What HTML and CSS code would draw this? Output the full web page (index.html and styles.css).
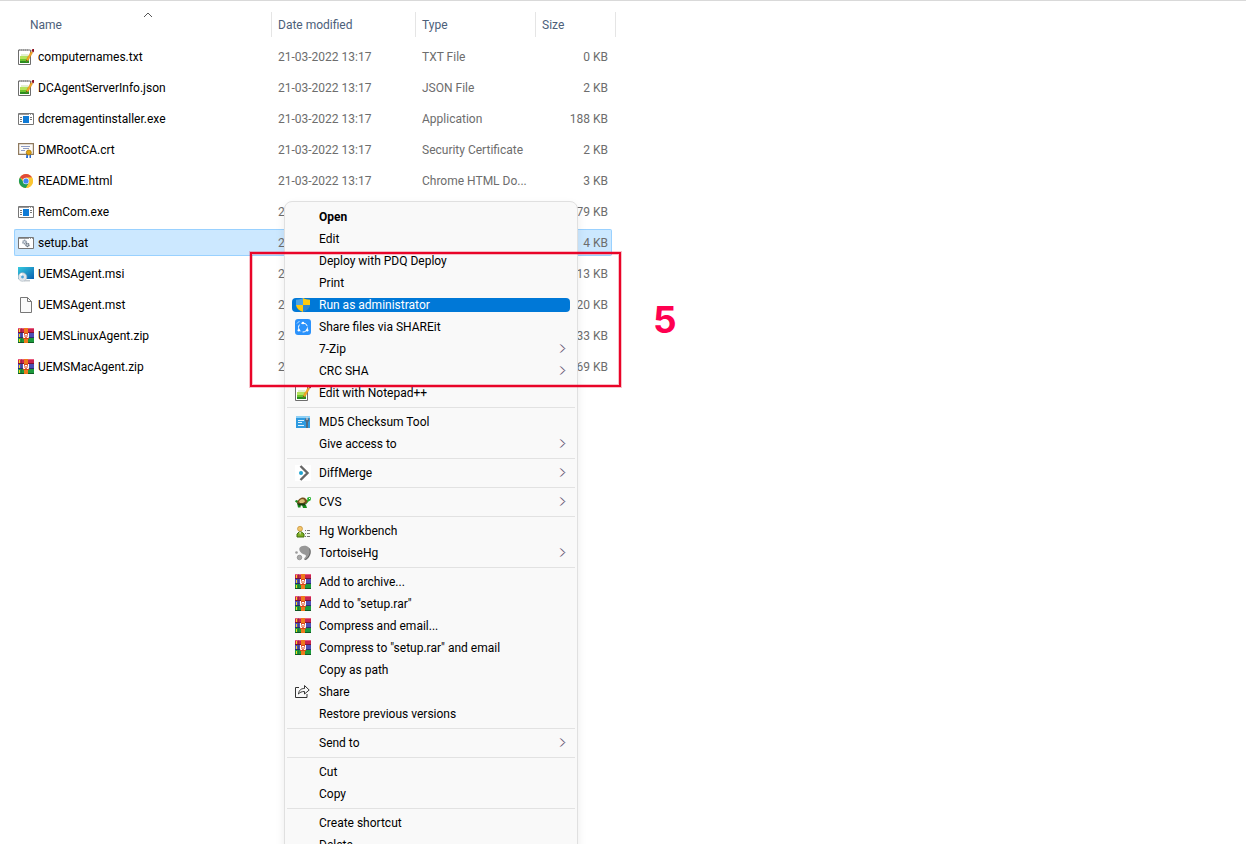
FILE: index.html
```
<!DOCTYPE html>
<html lang="en">
<head>
    <title>Files</title>
    <meta charset="UTF-8">
    <link rel="stylesheet" href="styles.css">
</head>
<body>
    <!-- icon set -->
    <svg class="icon-set" aria-hidden="true">
        <symbol id="notepad" viewBox="0 0 16 16">
            <path d="M.5 1h12v14.500H.5z" fill="#fff" stroke="#6d6d6d"/>
            <path d="M1.500 0v2M3.500 0v2M5.500 0v2M7.500 0v2M9.500 0v2" stroke="#999"/>
            <path d="M3 5h7v2H3z" fill="#e3f0cf"/>
            <path d="M2 7h9v3H2z" fill="#b4e35c"/>
            <path d="M2 10h9v2H2z" fill="#6cc42e"/>
            <path d="M2 12h9v2H2z" fill="#2b8c20"/>
            <path d="M8 12.500l.7-2.500L13 2.500l1.700 1-4.200 7.500z" fill="#f7a823" stroke="#c0761a" stroke-width=".4"/>
            <path d="M13.500 1.500L14.500 0h1.500v2.500l-1 1z" fill="#8d1020"/>
            <path d="M8 12.500l.5-1.600 1 .6z" fill="#333"/>
        </symbol>
        <symbol id="exe" viewBox="0 0 16 16">
            <path d="M.5 2.500h15v11H.5z" fill="#fff" stroke="#777"/>
            <path d="M1 3h14v1H1z" fill="#999"/>
            <path d="M11 3h1v1h-1zM13 3h1v1h-1z" fill="#fff"/>
            <path d="M2 6.500h2M2 8.500h2M2 10.500h2M12 6.500h2M12 8.500h2" stroke="#777"/>
            <path d="M5 5h6v7H5z" fill="#0f7bd6"/>
        </symbol>
        <symbol id="cert" viewBox="0 0 16 16">
            <path d="M.6 1.600h14.800v10.800H.6z" fill="#fdfbf7" stroke="#8f7a5f" stroke-width="1.200"/>
            <path d="M3 4.500h9M5 6.500h6M3 8.500h4" stroke="#8e9cc4"/>
            <path d="M8.500 11h1.500v5H8zM11.500 11H13v5h-1.500z" fill="#2b6bd1"/>
            <circle cx="10.800" cy="10.500" r="2.500" fill="#e2a513" stroke="#a06d05" stroke-width=".7"/>
        </symbol>
        <symbol id="chrome" viewBox="0 0 16 16">
            <circle cx="8" cy="8" r="7" fill="#fbc02d"/>
            <path d="M8 8L1.900 4.500A7 7 0 0 1 14.100 4.500L8 5z" fill="#e04a3a"/>
            <path d="M1.900 4.500A7 7 0 0 0 8 15l3-5.200L5.500 9z" fill="#1f9d58"/>
            <path d="M8 4.600h6.100A7 7 0 0 1 8 15l3-5.200z" fill="#fbc631"/>
            <circle cx="8" cy="8" r="3.200" fill="#f4f4f4"/>
            <circle cx="8" cy="8" r="2.600" fill="#4285f4"/>
        </symbol>
        <symbol id="bat" viewBox="0 0 16 16">
            <path d="M.5 2.500h15v11H.5z" fill="#fff" stroke="#777"/>
            <path d="M1 3h14v1H1z" fill="#999"/>
            <path d="M11 3h1v1h-1zM13 3h1v1h-1z" fill="#fff"/>
            <circle cx="6.500" cy="7" r="1.700" fill="#d9dfe6" stroke="#8a97a5" stroke-width="1.400" stroke-dasharray="1.300 .4"/>
            <circle cx="9.500" cy="10" r="1.500" fill="#d9dfe6" stroke="#67737f" stroke-width="1.400" stroke-dasharray="1.300 .4"/>
        </symbol>
        <symbol id="msi" viewBox="0 0 16 16">
            <linearGradient id="screen" x2="1" y2="1">
                <stop stop-color="#35cbe0"/>
                <stop offset="1" stop-color="#0a5fb0"/>
            </linearGradient>
            <path d="M0 1h16v12H0z" fill="url(#screen)"/>
            <path d="M6 14h6v1.500H6z" fill="#c6ccd1"/>
            <circle cx="4.500" cy="11" r="4.300" fill="#dfe5ea" stroke="#a9b4bd" stroke-width=".6"/>
            <path d="M4.500 11L1.500 8.200 4 7z" fill="#fff"/>
            <circle cx="4.500" cy="11" r="1.400" fill="#4fa3d8"/>
        </symbol>
        <symbol id="blank" viewBox="0 0 16 16">
            <path d="M2.500 .5h7l4 4v11h-11z" fill="#fafafa" stroke="#777"/>
            <path d="M9.500 .5v4h4" fill="none" stroke="#777"/>
        </symbol>
        <symbol id="rar" viewBox="0 0 16 16">
            <path d="M0 0h16v5H0z" fill="#c92350"/>
            <path d="M0 0h16v1H0z" fill="#e85a7e"/>
            <path d="M0 4h16v1H0z" fill="#7d1233"/>
            <path d="M0 5h16v5H0z" fill="#4d4fb5"/>
            <path d="M0 9h16v1H0z" fill="#2b2c72"/>
            <path d="M0 10h16v5H0z" fill="#1c9a3c"/>
            <path d="M0 14h16v1H0z" fill="#0e5a22"/>
            <path d="M1.500 1v3M1.500 6v3M1.500 11v3" stroke="#f5d91f"/>
            <path d="M3.500 0v15" stroke="#333" stroke-opacity=".3"/>
            <path d="M6 0h4v15H6z" fill="#ee7a1c"/>
            <path d="M5 5h6v6H5z" fill="#d9451b"/>
            <path d="M5.500 5v4.500H7V6.500h2v3h1.500V5" fill="none" stroke="#fff"/>
        </symbol>
        <symbol id="shield" viewBox="0 0 16 16">
            <path d="M8 1c2 1.200 4 1.700 7 1.700V8H8z" fill="#ffc90e"/>
            <path d="M8 1C6 2.200 4 2.700 1 2.700V8h7z" fill="#4aa3e6"/>
            <path d="M1 8c.4 3.500 3 5.500 7 7V8z" fill="#ffc90e"/>
            <path d="M15 8c-.4 3.500-3 5.500-7 7V8z" fill="#2f86cf"/>
        </symbol>
        <symbol id="shareit" viewBox="0 0 16 16">
            <rect width="16" height="16" rx="3" fill="#2b92fb"/>
            <circle cx="8" cy="8.500" r="4.500" fill="none" stroke="#fff" stroke-dasharray="7.400 2"/>
            <circle cx="8" cy="4" r="1.200" fill="#fff"/>
            <circle cx="3.800" cy="11.200" r="1.200" fill="#fff"/>
            <circle cx="12.200" cy="11.200" r="1.200" fill="#fff"/>
            <path d="M2 4.500L4.500 2" stroke="#bfe0ff"/>
        </symbol>
        <symbol id="md5" viewBox="0 0 16 16">
            <path d="M1 2h14v12H1z" fill="#2f9be0"/>
            <path d="M1 2h14v2H1z" fill="#8fd0f5"/>
            <path d="M3 6.500h6M3 8.500h4M3 11.500h6" stroke="#dff3ff"/>
            <path d="M10 5l2-1.500L14 5v2l-1 1v6h-2V8l-1-1z" fill="#536b80"/>
            <path d="M11.500 3v3h1V3z" fill="#e8eef2"/>
        </symbol>
        <symbol id="diffmerge" viewBox="0 0 16 16">
            <path d="M0 0h16v16H0z" fill="#fff"/>
            <path d="M5.500 1l7 7-7 7" fill="none" stroke="#666" stroke-width="2.400"/>
            <circle cx="6" cy="8" r="2" fill="#1fa3cf"/>
        </symbol>
        <symbol id="turtle" viewBox="0 0 16 16">
            <path d="M2 9L0 7.500l1-1.500 3 1zM2 9h4l-.5 4.500H3zM7 11h4l1 3H8z" fill="#168c1b"/>
            <path d="M10 8l2.500-2.500-.5-1.500L14 3l2 .5-.3 2.700-2.200 1.300L11 10.500z" fill="#22b02a"/>
            <path d="M2 9c1-4 4-5.500 6-5.500s4 1.500 4.500 4.500L9 11H4z" fill="#77501d"/>
            <path d="M5 6l2-1 2 .5 1 2-2 1.500H5L4 7.500z" fill="#d8bf78"/>
            <path d="M2 9.500h9l-1 2H4z" fill="#143d12"/>
            <path d="M14 4h1v1h-1z" fill="#fff"/>
        </symbol>
        <symbol id="workbench" viewBox="0 0 16 16">
            <circle cx="5" cy="5.800" r="2.500" fill="#f2c46c" stroke="#b98322" stroke-width=".6"/>
            <path d="M2 14v-3L4 9h2.500l2.500 2v3z" fill="#7eae23" stroke="#3f6d0e"/>
            <path d="M4.300 9h1.500l-.7 3z" fill="#fff"/>
            <path d="M10 7.500h1M12 7.500h3M10 10.500h1M12 10.500h3M10 13.500h1M12 13.500h3" stroke="#777"/>
        </symbol>
        <symbol id="tortoisehg" viewBox="0 0 16 16">
            <path d="M4.500 3C6 .8 9 .2 12 1.200c3.500 1.500 4.500 5.800 3 9.300-1 2.500-3 4.500-5 4.500-1.500-.2-1-1.500 0-2.500 1.500-1.500 1-2.500-.5-3C6.500 8.500 3.500 6 4.500 3z" fill="#979797"/>
            <path d="M14.500 3.500c1.500 3 .6 8-4.300 11.300" fill="none" stroke="#555" stroke-width=".8"/>
            <circle cx="4.500" cy="12.500" r="2.300" fill="#a8a8a8" stroke="#777" stroke-width=".6"/>
            <circle cx="1.500" cy="7.500" r="1.300" fill="#9b9b9b"/>
        </symbol>
        <symbol id="share" viewBox="0 0 16 16">
            <path d="M4 3.500H.5v10h11.500V10" fill="none" stroke="#333"/>
            <path d="M3.500 10C4 6 6 4.500 9.500 4.500v-3L14.200 6 9.500 10V7.500C6.500 7.500 5 8.300 3.500 10z" fill="none" stroke="#333" stroke-linejoin="round"/>
        </symbol>
        <symbol id="chevron" viewBox="0 0 8 10">
            <path d="M1 .5l4 4-4 4" fill="none" stroke="#f0a88c"/>
            <path d="M2 .5l4 4-4 4" fill="none" stroke="#5b9fd6"/>
            <path d="M1.500 .5l4 4-4 4" fill="none" stroke="#7b4a68" stroke-width=".6"/>
        </symbol>
    </svg>

    <main class="file-pane">
        <table class="file-list">
            <colgroup>
                <col class="col-name">
                <col class="col-date">
                <col class="col-type">
                <col class="col-size">
            </colgroup>
            <thead>
                <tr>
                    <th class="sorted">Name
                        <svg class="sort-arrow" viewBox="0 0 10 6"><path d="M1 5l4-4 4 4" fill="none" stroke="#555"/></svg>
                    </th>
                    <th>Date modified</th>
                    <th>Type</th>
                    <th>Size</th>
                </tr>
            </thead>
            <tbody>
                <tr>
                    <td><span class="file-name"><svg class="icon"><use href="#notepad"/></svg>computernames.txt</span></td>
                    <td>21-03-2022 13:17</td>
                    <td>TXT File</td>
                    <td>0 KB</td>
                </tr>
                <tr>
                    <td><span class="file-name"><svg class="icon"><use href="#notepad"/></svg>DCAgentServerInfo.json</span></td>
                    <td>21-03-2022 13:17</td>
                    <td>JSON File</td>
                    <td>2 KB</td>
                </tr>
                <tr>
                    <td><span class="file-name"><svg class="icon"><use href="#exe"/></svg>dcremagentinstaller.exe</span></td>
                    <td>21-03-2022 13:17</td>
                    <td>Application</td>
                    <td>188 KB</td>
                </tr>
                <tr>
                    <td><span class="file-name"><svg class="icon"><use href="#cert"/></svg>DMRootCA.crt</span></td>
                    <td>21-03-2022 13:17</td>
                    <td>Security Certificate</td>
                    <td>2 KB</td>
                </tr>
                <tr>
                    <td><span class="file-name"><svg class="icon"><use href="#chrome"/></svg>README.html</span></td>
                    <td>21-03-2022 13:17</td>
                    <td>Chrome HTML Do...</td>
                    <td>3 KB</td>
                </tr>
                <tr>
                    <td><span class="file-name"><svg class="icon"><use href="#exe"/></svg>RemCom.exe</span></td>
                    <td>21-03-2022 13:17</td>
                    <td></td>
                    <td>279 KB</td>
                </tr>
                <tr class="selected">
                    <td><span class="file-name"><svg class="icon"><use href="#bat"/></svg>setup.bat</span></td>
                    <td>21-03-2022 13:17</td>
                    <td></td>
                    <td>4 KB</td>
                </tr>
                <tr>
                    <td><span class="file-name"><svg class="icon"><use href="#msi"/></svg>UEMSAgent.msi</span></td>
                    <td>21-03-2022 13:17</td>
                    <td></td>
                    <td>313 KB</td>
                </tr>
                <tr>
                    <td><span class="file-name"><svg class="icon"><use href="#blank"/></svg>UEMSAgent.mst</span></td>
                    <td>21-03-2022 13:17</td>
                    <td></td>
                    <td>20 KB</td>
                </tr>
                <tr>
                    <td><span class="file-name"><svg class="icon"><use href="#rar"/></svg>UEMSLinuxAgent.zip</span></td>
                    <td>21-03-2022 13:17</td>
                    <td></td>
                    <td>533 KB</td>
                </tr>
                <tr>
                    <td><span class="file-name"><svg class="icon"><use href="#rar"/></svg>UEMSMacAgent.zip</span></td>
                    <td>21-03-2022 13:17</td>
                    <td></td>
                    <td>769 KB</td>
                </tr>
            </tbody>
        </table>
    </main>

    <!-- right-click menu -->
    <div class="context-menu">
        <button class="default"><span class="icon"></span>Open</button>
        <button><span class="icon"></span>Edit</button>
        <button><span class="icon"></span>Deploy with PDQ Deploy</button>
        <button><span class="icon"></span>Print</button>
        <button class="active"><svg class="icon"><use href="#shield"/></svg>Run as administrator</button>
        <button><svg class="icon"><use href="#shareit"/></svg>Share files via SHAREit</button>
        <button><span class="icon"></span>7-Zip<svg class="chevron"><use href="#chevron"/></svg></button>
        <button><span class="icon"></span>CRC SHA<svg class="chevron"><use href="#chevron"/></svg></button>
        <button><svg class="icon"><use href="#notepad"/></svg>Edit with Notepad++</button>
        <hr>
        <button><svg class="icon"><use href="#md5"/></svg>MD5 Checksum Tool</button>
        <button><span class="icon"></span>Give access to<svg class="chevron"><use href="#chevron"/></svg></button>
        <hr>
        <button><svg class="icon"><use href="#diffmerge"/></svg>DiffMerge<svg class="chevron"><use href="#chevron"/></svg></button>
        <hr>
        <button><svg class="icon"><use href="#turtle"/></svg>CVS<svg class="chevron"><use href="#chevron"/></svg></button>
        <hr>
        <button><svg class="icon"><use href="#workbench"/></svg>Hg Workbench</button>
        <button><svg class="icon"><use href="#tortoisehg"/></svg>TortoiseHg<svg class="chevron"><use href="#chevron"/></svg></button>
        <hr>
        <button><svg class="icon"><use href="#rar"/></svg>Add to archive...</button>
        <button><svg class="icon"><use href="#rar"/></svg>Add to "setup.rar"</button>
        <button><svg class="icon"><use href="#rar"/></svg>Compress and email...</button>
        <button><svg class="icon"><use href="#rar"/></svg>Compress to "setup.rar" and email</button>
        <button><span class="icon"></span>Copy as path</button>
        <button><svg class="icon"><use href="#share"/></svg>Share</button>
        <button><span class="icon"></span>Restore previous versions</button>
        <hr>
        <button><span class="icon"></span>Send to<svg class="chevron"><use href="#chevron"/></svg></button>
        <hr>
        <button><span class="icon"></span>Cut</button>
        <button><span class="icon"></span>Copy</button>
        <hr>
        <button><span class="icon"></span>Create shortcut</button>
        <button><span class="icon"></span>Delete</button>
    </div>

    <!-- step marker -->
    <div class="step-box"></div>
    <div class="step-number">5</div>
</body>
</html>
```

FILE: styles.css
```
body {
    margin: 0;
    height: 100vh;
    overflow: hidden;
    position: relative;
    background: #fff;
    font-family: Roboto, "Open Sans", sans-serif;
    font-size: 12px;
    line-height: 16px;
    color: #000;
}
.icon-set {
    position: absolute;
    width: 0;
    height: 0;
}
.icon {
    width: 16px;
    height: 16px;
    flex: none;
}

/* file list */
.file-pane {
    border-top: 1px solid #d9d9d9;
    padding: 7px 14px;
}
.file-list {
    width: 598px;
    table-layout: fixed;
    border-collapse: separate;
    border-spacing: 0 4px;
}
.col-name {
    width: 257px;
}
.col-date {
    width: 144px;
}
.col-type {
    width: 120px;
}
th {
    height: 27px;
    box-sizing: border-box;
    padding: 0 0 2px 7px;
    text-align: left;
    font-weight: normal;
    color: #4c607a;
    white-space: nowrap;
    background: linear-gradient(#e5e5e5, #e5e5e5) no-repeat left top / 1px 25px;
}
th.sorted {
    position: relative;
    padding-left: 16px;
    background: none;
}
th:last-child {
    position: relative;
}
th:last-child::after {
    content: "";
    position: absolute;
    top: 0;
    right: -4px;
    width: 1px;
    height: 25px;
    background: #e5e5e5;
}
.sort-arrow {
    position: absolute;
    top: 0;
    left: 50%;
    width: 10px;
    height: 6px;
}
td {
    height: 27px;
    box-sizing: border-box;
    padding: 0 0 0 7px;
    color: #6d6d6d;
    white-space: nowrap;
    border: 1px solid transparent;
    border-width: 1px 0;
}
td:first-child {
    padding-left: 3px;
    border-left-width: 1px;
    color: #000;
}
td:last-child {
    padding-right: 3px;
    border-right-width: 1px;
    text-align: right;
}
.file-name {
    display: flex;
    align-items: center;
    gap: 4px;
}
.selected td {
    background: #cce8ff;
    border-color: #99d1ff;
}
.selected td:first-child {
    border-radius: 2px 0 0 2px;
}
.selected td:last-child {
    border-radius: 0 2px 2px 0;
}

/* context menu */
.context-menu {
    position: absolute;
    top: 201px;
    left: 284px;
    width: 294px;
    box-sizing: border-box;
    padding: 4px 2px;
    background: #f9f9f9;
    border: 1px solid #e0e0e0;
    border-radius: 8px;
    box-shadow: 0 4px 10px rgba(0, 0, 0, 0.08);
}
.context-menu button {
    display: flex;
    align-items: center;
    gap: 8px;
    width: 100%;
    height: 22px;
    padding: 0 8px;
    border: none;
    background: none;
    font: inherit;
    color: #000;
    text-align: left;
}
.context-menu .default {
    font-weight: bold;
}
.context-menu .active {
    width: 278px;
    height: 14px;
    margin: 4px 5px;
    padding: 0 3px;
    border-radius: 4px;
    background: #0078d7;
    color: #fff;
}
.context-menu hr {
    height: 1px;
    margin: 3px 0;
    border: none;
    background: #e2e2e2;
}
.chevron {
    width: 8px;
    height: 10px;
    margin-left: auto;
}

/* step marker */
.step-box {
    position: absolute;
    top: 252px;
    left: 250px;
    width: 371px;
    height: 135px;
    box-sizing: border-box;
    border: 2px solid #e90428;
    box-shadow: 0 0 0 1px rgba(233, 4, 40, 0.25), inset 0 0 0 1px rgba(233, 4, 40, 0.25);
}
.step-number {
    position: absolute;
    top: 300px;
    left: 653px;
    font-family: Inter, Lato, sans-serif;
    font-size: 37px;
    line-height: 40px;
    font-weight: bold;
    color: #ff0050;
}
```
